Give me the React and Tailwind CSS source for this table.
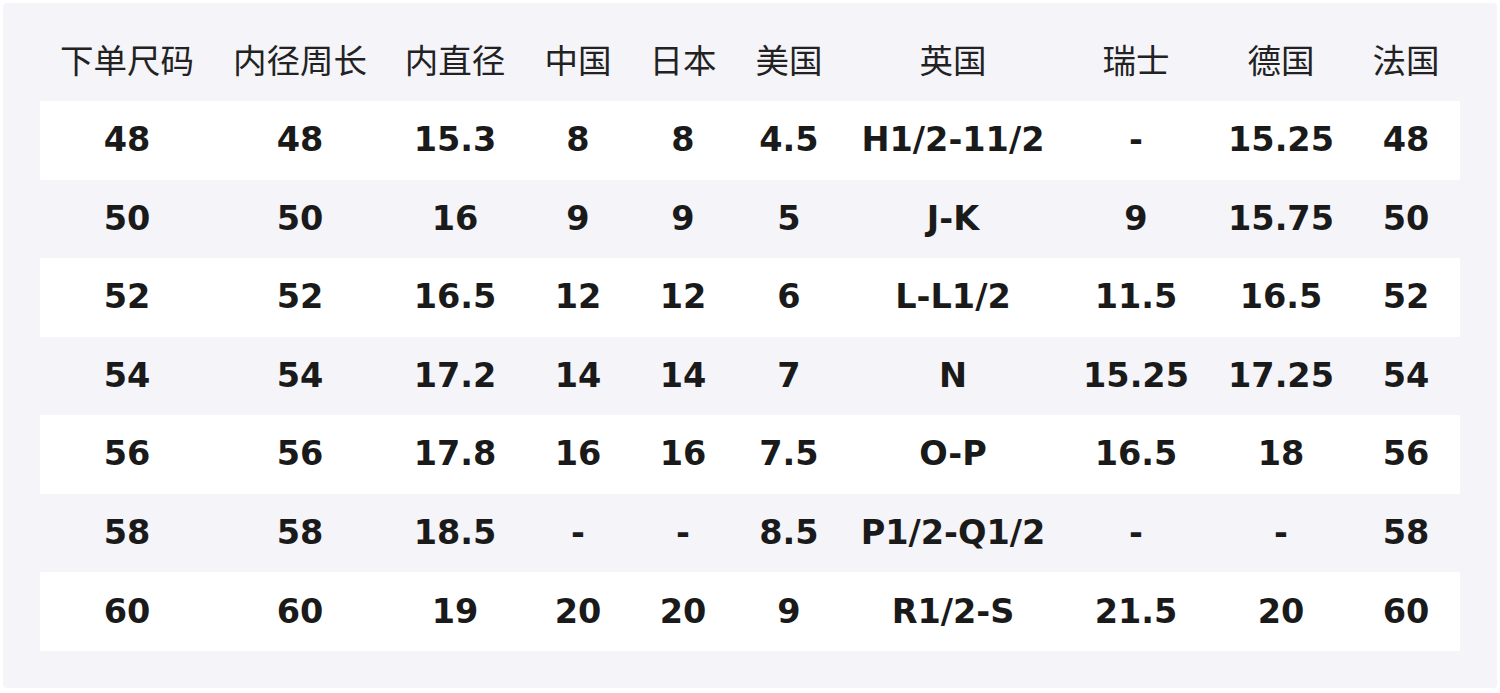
const headers = ["下单尺码", "内径周长", "内直径", "中国", "日本", "美国", "英国", "瑞士", "德国", "法国"];

const rows = [
  ["48", "48", "15.3", "8", "8", "4.5", "H1/2-11/2", "-", "15.25", "48"],
  ["50", "50", "16", "9", "9", "5", "J-K", "9", "15.75", "50"],
  ["52", "52", "16.5", "12", "12", "6", "L-L1/2", "11.5", "16.5", "52"],
  ["54", "54", "17.2", "14", "14", "7", "N", "15.25", "17.25", "54"],
  ["56", "56", "17.8", "16", "16", "7.5", "O-P", "16.5", "18", "56"],
  ["58", "58", "18.5", "-", "-", "8.5", "P1/2-Q1/2", "-", "-", "58"],
  ["60", "60", "19", "20", "20", "9", "R1/2-S", "21.5", "20", "60"],
];

const cols = "grid grid-cols-[174px_172px_138px_108px_102px_110px_218px_148px_142px_108px]";

export default function App() {
  return (
    <div className="w-[1500px] h-[693px] bg-white p-[3px]">
      <div className="h-[685px] rounded-[4px] bg-[#f4f4f9] pt-[19px] px-[37px] pb-[37px]">
        <div className={`${cols} h-[79px] pb-[4px] items-center text-[33.5px] text-[#222] font-['Noto_Sans_CJK_SC',sans-serif]`}>
          {headers.map((h) => (
            <div key={h} className="text-center whitespace-nowrap">{h}</div>
          ))}
        </div>
        {rows.map((r, i) => (
          <div
            key={i}
            className={`${cols} h-[78.57px] items-center text-[33.5px] font-bold text-[#1a1a1a] font-['DejaVu_Sans',sans-serif] ${i % 2 === 0 ? "bg-white" : ""}`}
          >
            {r.map((c, j) => (
              <div key={j} className="text-center whitespace-nowrap">{c}</div>
            ))}
          </div>
        ))}
      </div>
    </div>
  );
}
